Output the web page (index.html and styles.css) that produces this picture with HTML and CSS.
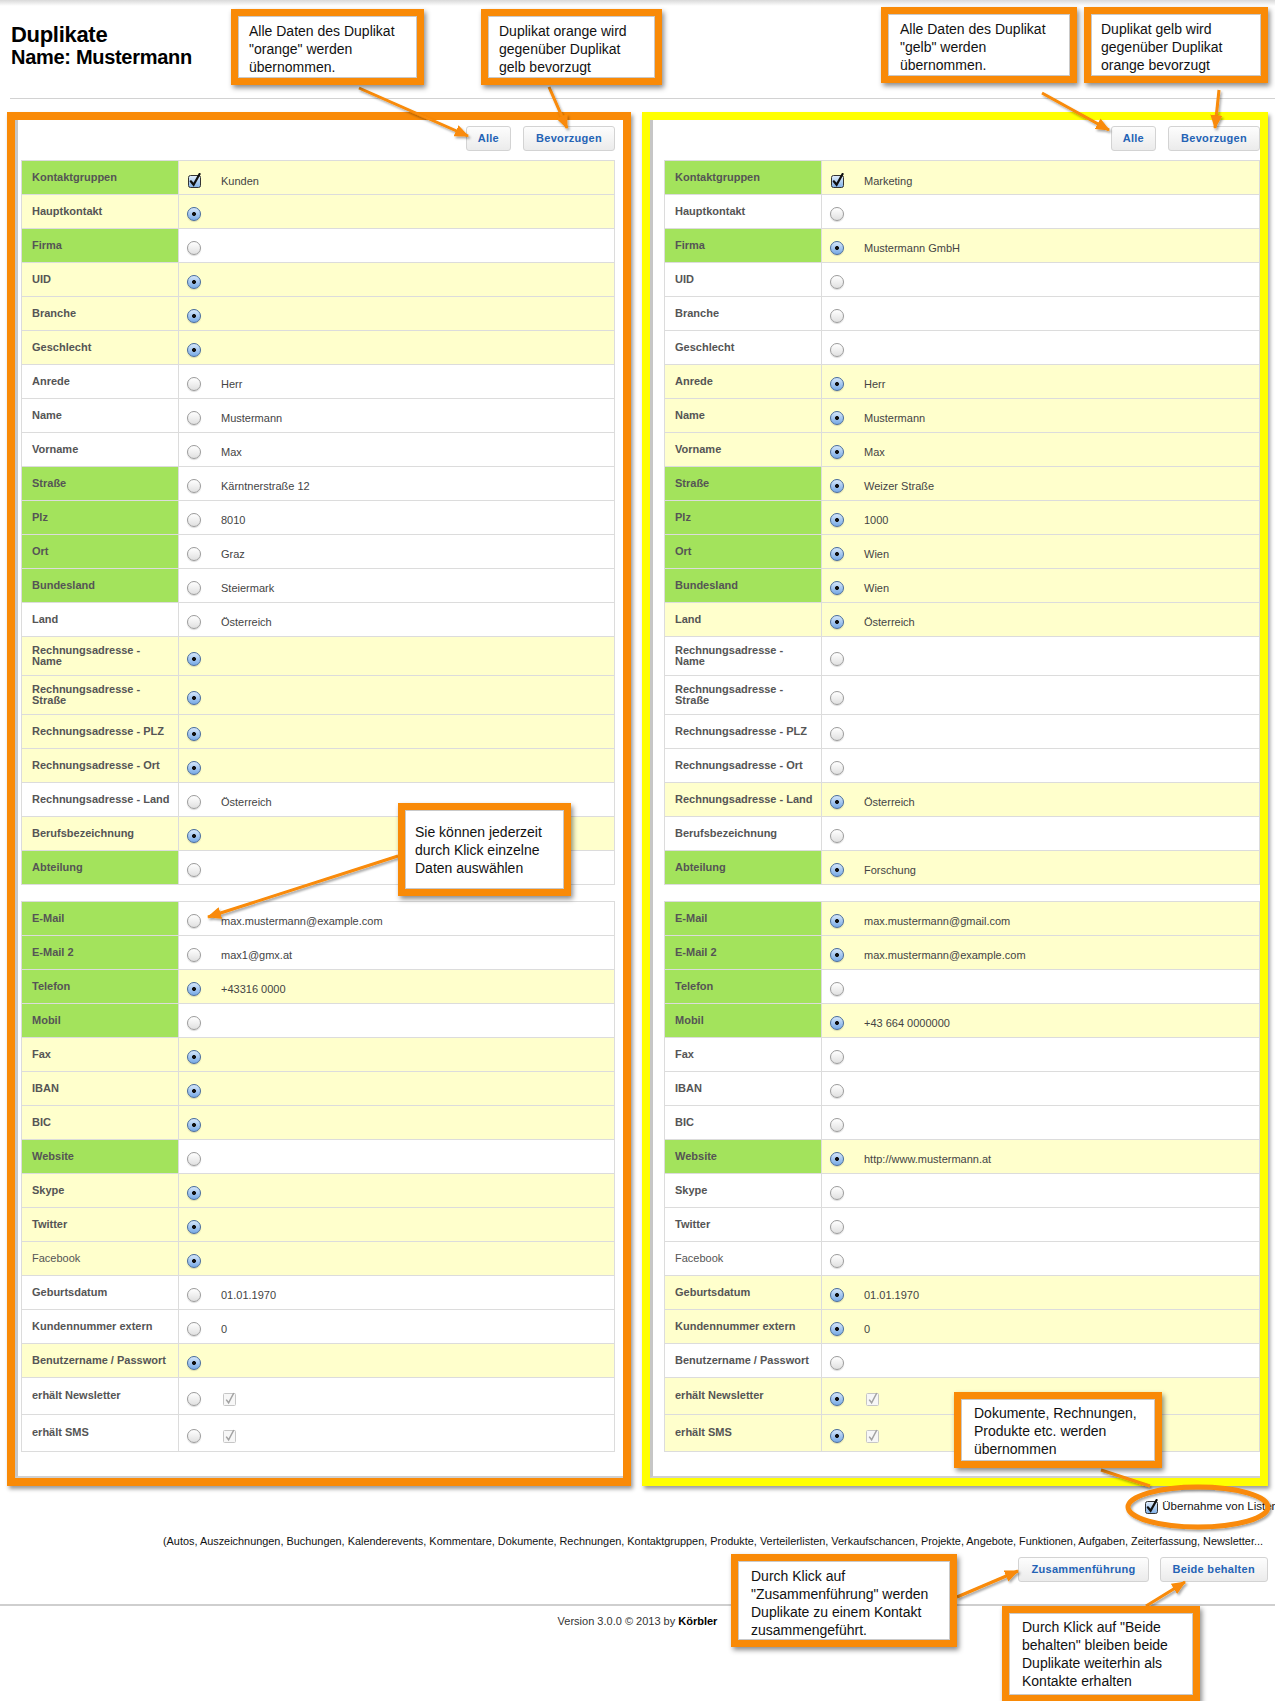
FILE: index.html
```html
<!DOCTYPE html>
<html lang="de">
<head>
    <meta charset="UTF-8">
    <title>Duplikate - Mustermann</title>
    <link rel="stylesheet" href="styles.css">
</head>
<body>
<svg class="defs" width="0" height="0">
    <defs>
        <linearGradient id="cbg" x1="0" y1="0" x2="0" y2="1">
            <stop offset="0" stop-color="#e4effb"/>
            <stop offset="1" stop-color="#7fb0e8"/>
        </linearGradient>
        <marker id="head" viewBox="0 0 14 12" refX="13" refY="6" markerWidth="14" markerHeight="12" markerUnits="userSpaceOnUse" orient="auto">
            <path d="M0 0 L14 6 L0 12 Z" fill="#f98a07"/>
        </marker>
        <filter id="shade" x="-20%" y="-20%" width="140%" height="160%">
            <feDropShadow dx="1.5" dy="2" stdDeviation="1.2" flood-color="#000" flood-opacity="0.35"/>
        </filter>
    </defs>
</svg>

<div class="page">

    <div class="page-header">
        <h1 class="title"><span class="title-main">Duplikate</span><span class="title-sub">Name: Mustermann</span></h1>
    </div>
    <div class="rule"></div>

    <div class="panels">

        <!-- Duplikat orange -->
        <div class="frame frame-orange">
            <div class="panel-body">
                <div class="panel-actions">
                    <span class="btn btn-small">Alle</span>
                    <span class="btn">Bevorzugen</span>
                </div>
                <table class="data">
                    <colgroup><col class="col-label"><col></colgroup>
                    <tr class="sel"><th class="diff">Kontaktgruppen</th><td><svg class="cb" viewBox="0 0 14 15"><rect x="0.5" y="2.5" width="12" height="12" rx="2" fill="url(#cbg)" stroke="#333"/><path d="M2.8 8.3 L5.6 11.8 L11.6 1" fill="none" stroke="#111" stroke-width="2.2" stroke-linecap="round"/></svg><span class="val">Kunden</span></td></tr>
                    <tr class="sel"><th>Hauptkontakt</th><td><span class="radio on"></span></td></tr>
                    <tr><th class="diff">Firma</th><td><span class="radio"></span></td></tr>
                    <tr class="sel"><th>UID</th><td><span class="radio on"></span></td></tr>
                    <tr class="sel"><th>Branche</th><td><span class="radio on"></span></td></tr>
                    <tr class="sel"><th>Geschlecht</th><td><span class="radio on"></span></td></tr>
                    <tr><th>Anrede</th><td><span class="radio"></span><span class="val">Herr</span></td></tr>
                    <tr><th>Name</th><td><span class="radio"></span><span class="val">Mustermann</span></td></tr>
                    <tr><th>Vorname</th><td><span class="radio"></span><span class="val">Max</span></td></tr>
                    <tr><th class="diff">Straße</th><td><span class="radio"></span><span class="val">Kärntnerstraße 12</span></td></tr>
                    <tr><th class="diff">Plz</th><td><span class="radio"></span><span class="val">8010</span></td></tr>
                    <tr><th class="diff">Ort</th><td><span class="radio"></span><span class="val">Graz</span></td></tr>
                    <tr><th class="diff">Bundesland</th><td><span class="radio"></span><span class="val">Steiermark</span></td></tr>
                    <tr><th>Land</th><td><span class="radio"></span><span class="val">Österreich</span></td></tr>
                    <tr class="sel two"><th>Rechnungsadresse -<br>Name</th><td><span class="radio on"></span></td></tr>
                    <tr class="sel two"><th>Rechnungsadresse -<br>Straße</th><td><span class="radio on"></span></td></tr>
                    <tr class="sel"><th>Rechnungsadresse - PLZ</th><td><span class="radio on"></span></td></tr>
                    <tr class="sel"><th>Rechnungsadresse - Ort</th><td><span class="radio on"></span></td></tr>
                    <tr><th>Rechnungsadresse - Land</th><td><span class="radio"></span><span class="val">Österreich</span></td></tr>
                    <tr class="sel"><th>Berufsbezeichnung</th><td><span class="radio on"></span></td></tr>
                    <tr><th class="diff">Abteilung</th><td><span class="radio"></span></td></tr>
                </table>

                <table class="data data-contact">
                    <colgroup><col class="col-label"><col></colgroup>
                    <tr><th class="diff">E-Mail</th><td><span class="radio"></span><span class="val">max.mustermann@example.com</span></td></tr>
                    <tr><th class="diff">E-Mail 2</th><td><span class="radio"></span><span class="val">max1@gmx.at</span></td></tr>
                    <tr class="sel"><th class="diff">Telefon</th><td><span class="radio on"></span><span class="val">+43316 0000</span></td></tr>
                    <tr><th class="diff">Mobil</th><td><span class="radio"></span></td></tr>
                    <tr class="sel"><th>Fax</th><td><span class="radio on"></span></td></tr>
                    <tr class="sel"><th>IBAN</th><td><span class="radio on"></span></td></tr>
                    <tr class="sel"><th>BIC</th><td><span class="radio on"></span></td></tr>
                    <tr><th class="diff">Website</th><td><span class="radio"></span></td></tr>
                    <tr class="sel"><th>Skype</th><td><span class="radio on"></span></td></tr>
                    <tr class="sel"><th>Twitter</th><td><span class="radio on"></span></td></tr>
                    <tr class="sel"><th class="plain">Facebook</th><td><span class="radio on"></span></td></tr>
                    <tr><th>Geburtsdatum</th><td><span class="radio"></span><span class="val">01.01.1970</span></td></tr>
                    <tr><th>Kundennummer extern</th><td><span class="radio"></span><span class="val">0</span></td></tr>
                    <tr class="sel"><th>Benutzername / Passwort</th><td><span class="radio on"></span></td></tr>
                    <tr class="tall"><th>erhält Newsletter</th><td><span class="radio"></span><svg class="cb-off" viewBox="0 0 14 15"><rect x="0.5" y="2.5" width="12" height="12" rx="1" fill="#f7f7f7" stroke="#c6c6c6"/><path d="M3.2 8.6 L5.6 11.8 L10.8 2" fill="none" stroke="#a2a2a2" stroke-width="1.5"/></svg></td></tr>
                    <tr class="tall"><th>erhält SMS</th><td><span class="radio"></span><svg class="cb-off" viewBox="0 0 14 15"><rect x="0.5" y="2.5" width="12" height="12" rx="1" fill="#f7f7f7" stroke="#c6c6c6"/><path d="M3.2 8.6 L5.6 11.8 L10.8 2" fill="none" stroke="#a2a2a2" stroke-width="1.5"/></svg></td></tr>
                </table>
            </div>
        </div>

        <!-- Duplikat gelb -->
        <div class="frame frame-yellow">
            <div class="panel-body">
                <div class="panel-actions">
                    <span class="btn btn-small">Alle</span>
                    <span class="btn">Bevorzugen</span>
                </div>
                <table class="data">
                    <colgroup><col class="col-label"><col></colgroup>
                    <tr class="sel"><th class="diff">Kontaktgruppen</th><td><svg class="cb" viewBox="0 0 14 15"><rect x="0.5" y="2.5" width="12" height="12" rx="2" fill="url(#cbg)" stroke="#333"/><path d="M2.8 8.3 L5.6 11.8 L11.6 1" fill="none" stroke="#111" stroke-width="2.2" stroke-linecap="round"/></svg><span class="val">Marketing</span></td></tr>
                    <tr><th>Hauptkontakt</th><td><span class="radio"></span></td></tr>
                    <tr class="sel"><th class="diff">Firma</th><td><span class="radio on"></span><span class="val">Mustermann GmbH</span></td></tr>
                    <tr><th>UID</th><td><span class="radio"></span></td></tr>
                    <tr><th>Branche</th><td><span class="radio"></span></td></tr>
                    <tr><th>Geschlecht</th><td><span class="radio"></span></td></tr>
                    <tr class="sel"><th>Anrede</th><td><span class="radio on"></span><span class="val">Herr</span></td></tr>
                    <tr class="sel"><th>Name</th><td><span class="radio on"></span><span class="val">Mustermann</span></td></tr>
                    <tr class="sel"><th>Vorname</th><td><span class="radio on"></span><span class="val">Max</span></td></tr>
                    <tr class="sel"><th class="diff">Straße</th><td><span class="radio on"></span><span class="val">Weizer Straße</span></td></tr>
                    <tr class="sel"><th class="diff">Plz</th><td><span class="radio on"></span><span class="val">1000</span></td></tr>
                    <tr class="sel"><th class="diff">Ort</th><td><span class="radio on"></span><span class="val">Wien</span></td></tr>
                    <tr class="sel"><th class="diff">Bundesland</th><td><span class="radio on"></span><span class="val">Wien</span></td></tr>
                    <tr class="sel"><th>Land</th><td><span class="radio on"></span><span class="val">Österreich</span></td></tr>
                    <tr class="two"><th>Rechnungsadresse -<br>Name</th><td><span class="radio"></span></td></tr>
                    <tr class="two"><th>Rechnungsadresse -<br>Straße</th><td><span class="radio"></span></td></tr>
                    <tr><th>Rechnungsadresse - PLZ</th><td><span class="radio"></span></td></tr>
                    <tr><th>Rechnungsadresse - Ort</th><td><span class="radio"></span></td></tr>
                    <tr class="sel"><th>Rechnungsadresse - Land</th><td><span class="radio on"></span><span class="val">Österreich</span></td></tr>
                    <tr><th>Berufsbezeichnung</th><td><span class="radio"></span></td></tr>
                    <tr class="sel"><th class="diff">Abteilung</th><td><span class="radio on"></span><span class="val">Forschung</span></td></tr>
                </table>

                <table class="data data-contact">
                    <colgroup><col class="col-label"><col></colgroup>
                    <tr class="sel"><th class="diff">E-Mail</th><td><span class="radio on"></span><span class="val">max.mustermann@gmail.com</span></td></tr>
                    <tr class="sel"><th class="diff">E-Mail 2</th><td><span class="radio on"></span><span class="val">max.mustermann@example.com</span></td></tr>
                    <tr><th class="diff">Telefon</th><td><span class="radio"></span></td></tr>
                    <tr class="sel"><th class="diff">Mobil</th><td><span class="radio on"></span><span class="val">+43 664 0000000</span></td></tr>
                    <tr><th>Fax</th><td><span class="radio"></span></td></tr>
                    <tr><th>IBAN</th><td><span class="radio"></span></td></tr>
                    <tr><th>BIC</th><td><span class="radio"></span></td></tr>
                    <tr class="sel"><th class="diff">Website</th><td><span class="radio on"></span><span class="val">http://www.mustermann.at</span></td></tr>
                    <tr><th>Skype</th><td><span class="radio"></span></td></tr>
                    <tr><th>Twitter</th><td><span class="radio"></span></td></tr>
                    <tr><th class="plain">Facebook</th><td><span class="radio"></span></td></tr>
                    <tr class="sel"><th>Geburtsdatum</th><td><span class="radio on"></span><span class="val">01.01.1970</span></td></tr>
                    <tr class="sel"><th>Kundennummer extern</th><td><span class="radio on"></span><span class="val">0</span></td></tr>
                    <tr><th>Benutzername / Passwort</th><td><span class="radio"></span></td></tr>
                    <tr class="sel tall"><th>erhält Newsletter</th><td><span class="radio on"></span><svg class="cb-off" viewBox="0 0 14 15"><rect x="0.5" y="2.5" width="12" height="12" rx="1" fill="#f7f7f7" stroke="#c6c6c6"/><path d="M3.2 8.6 L5.6 11.8 L10.8 2" fill="none" stroke="#a2a2a2" stroke-width="1.5"/></svg></td></tr>
                    <tr class="sel tall"><th>erhält SMS</th><td><span class="radio on"></span><svg class="cb-off" viewBox="0 0 14 15"><rect x="0.5" y="2.5" width="12" height="12" rx="1" fill="#f7f7f7" stroke="#c6c6c6"/><path d="M3.2 8.6 L5.6 11.8 L10.8 2" fill="none" stroke="#a2a2a2" stroke-width="1.5"/></svg></td></tr>
                </table>
            </div>
        </div>
    </div>

    <div class="transfer">
        <svg class="cb" viewBox="0 0 14 15"><rect x="0.5" y="2.5" width="12" height="12" rx="2" fill="url(#cbg)" stroke="#333"/><path d="M2.8 8.3 L5.6 11.8 L11.6 1" fill="none" stroke="#111" stroke-width="2.2" stroke-linecap="round"/></svg>
        <span>Übernahme von Listen</span>
    </div>
    <p class="transfer-list">(Autos, Auszeichnungen, Buchungen, Kalenderevents, Kommentare, Dokumente, Rechnungen, Kontaktgruppen, Produkte, Verteilerlisten, Verkaufschancen, Projekte, Angebote, Funktionen, Aufgaben, Zeiterfassung, Newsletter...</p>

    <div class="main-actions">
        <span class="btn">Zusammenführung</span>
        <span class="btn">Beide behalten</span>
    </div>

    <div class="footer">Version 3.0.0 &copy; 2013 by <b>Körbler</b></div>

    <!-- Annotations -->
    <svg class="arrows" width="1275" height="1701" viewBox="0 0 1275 1701">
        <g filter="url(#shade)" stroke="#f98a07" stroke-width="3" fill="none">
            <path d="M359 88 L468 136" marker-end="url(#head)"/>
            <path d="M549 87 L567 128" marker-end="url(#head)"/>
            <path d="M1042 93 L1109 130" marker-end="url(#head)"/>
            <path d="M1219 90 L1215 128" marker-end="url(#head)"/>
            <path d="M398 856 L208 917" marker-end="url(#head)"/>
            <path d="M1101 1470 L1150 1486"/>
            <path d="M957 1597 L1018 1571" marker-end="url(#head)"/>
            <path d="M1146 1606 L1185 1582" marker-end="url(#head)"/>
            <ellipse cx="1198" cy="1507" rx="70" ry="20" stroke-width="5"/>
        </g>
    </svg>

    <div class="note note-all-orange">Alle Daten des Duplikat<br>"orange" werden<br>übernommen.</div>
    <div class="note note-pref-orange">Duplikat orange wird<br>gegenüber Duplikat<br>gelb bevorzugt</div>
    <div class="note note-all-yellow">Alle Daten des Duplikat<br>"gelb" werden<br>übernommen.</div>
    <div class="note note-pref-yellow">Duplikat gelb wird<br>gegenüber Duplikat<br>orange bevorzugt</div>
    <div class="note note-pick">Sie können jederzeit<br>durch Klick einzelne<br>Daten auswählen</div>
    <div class="note note-lists">Dokumente, Rechnungen,<br>Produkte etc. werden<br>übernommen</div>
    <div class="note note-merge">Durch Klick auf<br>"Zusammenführung" werden<br>Duplikate zu einem Kontakt<br>zusammengeführt.</div>
    <div class="note note-keep">Durch Klick auf "Beide<br>behalten" bleiben beide<br>Duplikate weiterhin als<br>Kontakte erhalten</div>

</div>
</body>
</html>
```

FILE: styles.css
```css
html {
    overflow-x: hidden;
}

body {
    margin: 0;
    font-family: "Liberation Sans", Arial, sans-serif;
    color: #333;
    background: #fff linear-gradient(#d9d9d9, #fff 6px) no-repeat;
}

.defs {
    position: absolute;
    width: 0;
    height: 0;
}

.page {
    position: relative;
    width: 1275px;
    height: 1701px;
    overflow: hidden;
}

/* Kopfbereich */
.page-header {
    height: 98px;
    box-sizing: border-box;
    padding: 24px 11px 0;
}

.title {
    margin: 0;
    color: #000;
    font-weight: bold;
}

.title-main {
    display: block;
    font-size: 22px;
    line-height: 22px;
    letter-spacing: -0.3px;
}

.title-sub {
    display: block;
    font-size: 20px;
    line-height: 22px;
    letter-spacing: -0.3px;
}

.rule {
    height: 1px;
    margin-left: 10px;
    background-color: #d2d2d2;
}

/* Die beiden Duplikate */
.panels {
    display: grid;
    grid-template-columns: 624px 626px;
    column-gap: 11px;
    margin-top: 13px;
    padding-left: 7px;
}

.frame {
    border: 8px solid #f98a07;
    box-shadow: 2px 3px 4px rgba(0, 0, 0, 0.4);
}

.frame-yellow {
    border-color: #ffff00;
}

.panel-body {
    height: 100%;
    box-sizing: border-box;
    background-color: #fff;
    border-left: 3px solid #c6c6c6;
    border-bottom: 2px solid #d0d0d0;
    padding: 6px 8px 24px 3px;
}

.frame-yellow .panel-body {
    padding: 6px 0 24px 11px;
}

.panel-actions {
    display: flex;
    justify-content: flex-end;
    gap: 12px;
    margin-bottom: 9px;
}

.btn {
    display: inline-block;
    height: 25px;
    box-sizing: border-box;
    padding: 0 12px;
    line-height: 23px;
    border: 1px solid #d3d3d3;
    border-radius: 3px;
    background: linear-gradient(#fdfdfd, #ebebeb);
    color: #2463b5;
    font-size: 11px;
    font-weight: bold;
    letter-spacing: 0.3px;
    white-space: nowrap;
}

.btn-small {
    padding: 0 11px;
}

/* Datentabellen */
.data {
    width: 100%;
    table-layout: fixed;
    border-collapse: collapse;
    font-size: 11px;
}

.data-contact {
    margin-top: 16px;
}

.col-label {
    width: 157px;
}

.data tr {
    height: 34px;
}

.data tr.two {
    height: 39px;
}

.data tr.tall {
    height: 37px;
}

.data th,
.data td {
    border: 1px solid #dcdcdc;
    vertical-align: middle;
    white-space: nowrap;
}

.data th {
    text-align: left;
    padding: 0 6px 1px 10px;
    font-weight: bold;
    color: #555;
    line-height: 11px;
}

.data th.plain {
    font-weight: normal;
}

.data td {
    padding: 5px 8px 0;
    color: #444;
}

.data tr.sel th,
.data tr.sel td {
    background-color: #ffffcc;
}

.data th.diff,
.data tr.sel th.diff {
    background-color: #a3e35c;
}

.val {
    vertical-align: middle;
}

.radio {
    display: inline-block;
    width: 14px;
    height: 14px;
    box-sizing: border-box;
    margin-right: 20px;
    vertical-align: middle;
    border: 1px solid #9c9c9c;
    border-radius: 50%;
    background: linear-gradient(#ffffff, #e0e0e0);
    box-shadow: 0 1px 1px rgba(0, 0, 0, 0.15);
}

.radio.on {
    border-color: #4a6d9c;
    background:
        radial-gradient(circle, #111 0, #111 1.6px, transparent 2.3px),
        linear-gradient(#d4e6fa, #78aae6);
}

.cb {
    display: inline-block;
    width: 14px;
    height: 15px;
    margin: 0 19px 0 1px;
    vertical-align: middle;
}

.cb-off {
    display: inline-block;
    width: 14px;
    height: 15px;
    margin-left: 2px;
    vertical-align: middle;
}

/* Unterer Bereich */
.transfer {
    display: flex;
    align-items: center;
    justify-content: flex-end;
    gap: 3px;
    height: 20px;
    margin: 10px -3px 0 0;
    font-size: 11.5px;
    color: #111;
    white-space: nowrap;
}

.transfer .cb {
    margin: 0;
}

.transfer-list {
    margin: 18px 0 0;
    padding-right: 12px;
    text-align: right;
    font-size: 10.9px;
    line-height: 14px;
    color: #111;
    white-space: nowrap;
}

.main-actions {
    display: flex;
    justify-content: flex-end;
    gap: 11px;
    margin-top: 9px;
    padding-right: 7px;
}

.main-actions .btn {
    padding: 0 12px;
}

.footer {
    margin-top: 22px;
    padding-top: 8px;
    border-top: 2px solid #cfcfcf;
    text-align: center;
    font-size: 11px;
    line-height: 14px;
    color: #333;
}

.footer b {
    color: #000;
}

/* Hinweise */
.arrows {
    position: absolute;
    top: 0;
    left: 0;
    pointer-events: none;
}

.note {
    position: absolute;
    box-sizing: border-box;
    border: 7px solid #f98a07;
    background-color: #fff;
    box-shadow: 2px 3px 5px rgba(0, 0, 0, 0.45), inset 0 0 0 1px #c9c9c9;
    font-size: 14px;
    line-height: 18px;
    color: #111;
    white-space: nowrap;
}

.note-all-orange {
    left: 231px;
    top: 9px;
    width: 193px;
    height: 76px;
    padding: 6px 0 0 11px;
}

.note-pref-orange {
    left: 481px;
    top: 9px;
    width: 181px;
    height: 76px;
    padding: 6px 0 0 11px;
}

.note-all-yellow {
    left: 881px;
    top: 7px;
    width: 196px;
    height: 76px;
    padding: 6px 0 0 12px;
}

.note-pref-yellow {
    left: 1084px;
    top: 7px;
    width: 184px;
    height: 76px;
    padding: 6px 0 0 10px;
}

.note-pick {
    left: 398px;
    top: 803px;
    width: 173px;
    height: 93px;
    padding: 13px 0 0 10px;
}

.note-lists {
    left: 954px;
    top: 1392px;
    width: 208px;
    height: 76px;
    padding: 5px 0 0 13px;
}

.note-merge {
    left: 731px;
    top: 1554px;
    width: 226px;
    height: 93px;
    padding: 6px 0 0 13px;
}

.note-keep {
    left: 1002px;
    top: 1606px;
    width: 198px;
    height: 96px;
    padding: 5px 0 0 13px;
}
```
